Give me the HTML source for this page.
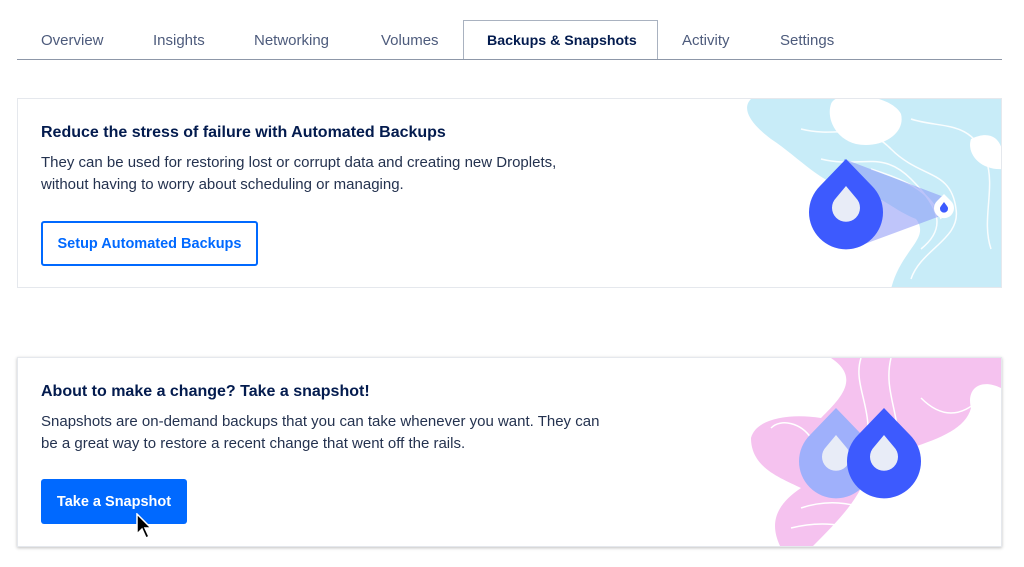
<!DOCTYPE html>
<html><head><style>
body{margin:0;background:#fff;font-family:"Liberation Sans",sans-serif;width:1024px;height:567px;overflow:hidden;position:relative;color:#031b4e}
.tabs{position:absolute;left:17px;top:59px;width:985px;border-top:1px solid #8d97a8}
.tab{position:absolute;top:32px;font-size:15px;color:#4d5b7c}
.active{position:absolute;left:463px;top:20px;width:195px;height:39px;border:1px solid #a9b2c0;border-bottom:none;background:#fff;box-sizing:border-box}
.card{position:absolute;left:17px;width:985px;height:190px;border:1px solid #e5e8ed;box-sizing:border-box;overflow:hidden;background:#fff}
h3{position:absolute;left:23px;margin:0;font-size:16px;font-weight:bold;color:#031b4e}
p{position:absolute;left:23px;margin:0;font-size:15px;line-height:22px;color:#24324f}
.btn{position:absolute;left:23px;height:45px;box-sizing:border-box;font-size:14.5px;font-weight:bold;border-radius:3px;display:flex;align-items:center;justify-content:center}
svg.art{position:absolute;right:0;top:0}
</style></head><body>
<div class="tabs"></div>
<div class="active"></div>
<div class="tab" style="left:41px">Overview</div>
<div class="tab" style="left:153px">Insights</div>
<div class="tab" style="left:254px">Networking</div>
<div class="tab" style="left:381px">Volumes</div>
<div class="tab" style="left:487px;color:#031b4e;font-weight:bold;font-size:14.2px;top:33px">Backups &amp; Snapshots</div>
<div class="tab" style="left:682px">Activity</div>
<div class="tab" style="left:780px">Settings</div>

<div class="card" style="top:98px">
<h3 style="top:25px">Reduce the stress of failure with Automated Backups</h3>
<p style="top:53px">They can be used for restoring lost or corrupt data and creating new Droplets,<br>without having to worry about scheduling or managing.</p>
<div class="btn" style="top:122px;width:217px;border:2px solid #0069ff;color:#0069ff">Setup Automated Backups</div>
<svg class="art" width="260" height="190" viewBox="0 0 260 190">
<path d="M10 0 H260 V190 H150 C160 150 190 140 175 120 C150 110 140 95 110 90 C80 85 60 60 30 40 C10 25 0 10 10 0Z" fill="#c8ecf8"/>
<path d="M90 5 C95 -10 150 -5 160 15 C165 35 140 50 115 45 C95 40 85 20 90 5Z" fill="#fff"/>
<path d="M230 40 C250 30 262 40 262 60 L262 70 C240 72 225 55 230 40Z" fill="#fff"/>
<g fill="none" stroke="#fff" stroke-width="1.5" opacity=".9">
<path d="M60 30 C100 40 120 20 150 50 C180 80 210 70 215 110 C220 140 180 150 170 180"/>
<path d="M80 60 C120 70 140 50 170 80 C200 110 205 130 180 150"/>
<path d="M170 20 C200 30 230 20 245 60 C255 90 240 120 250 150"/>
<path d="M130 70 C160 80 190 90 200 120"/>
</g>
<path d="M103 60 L203 98 L202 116 L110 150Z" fill="#7f8cf5" opacity=".5"/>
<g transform="translate(105,114)"><path d="M0,-54 L26,-27 A37,37 0 1 1 -26,-27 Z" fill="#3d5afe"/><path d="M0,-27 L10,-15 A14,14 0 1 1 -10,-15Z" fill="#e8ecf7"/></g>
<g transform="translate(203,109)"><path d="M0,-14 L7,-7 A10,10 0 1 1 -7,-7 Z" fill="#fff"/><path d="M0,-6 L3,-2 A4,4 0 1 1 -3,-2Z" fill="#3d5afe"/></g>
</svg>
</div>

<div class="card" style="top:357px;box-shadow:0 1px 3px rgba(0,0,0,.25)">
<h3 style="top:25px">About to make a change? Take a snapshot!</h3>
<p style="top:53px">Snapshots are on-demand backups that you can take whenever you want. They can<br>be a great way to restore a recent change that went off the rails.</p>
<div class="btn" style="top:121px;width:146px;background:#0069ff;color:#fff">Take a Snapshot</div>
<svg style="position:absolute;left:117px;top:155px" width="18" height="28" viewBox="0 0 18 28"><path d="M2 1 V21 L7 16 L11 25 L14 23.5 L10 15 L16 15Z" fill="#000" stroke="#fff" stroke-width="1.5"/></svg>
<svg class="art" width="260" height="190" viewBox="0 0 260 190">
<path d="M90 0 H260 V30 C240 20 225 30 230 50 C225 70 200 80 170 90 C160 110 150 120 120 130 C110 150 90 170 70 190 H40 C30 170 30 150 60 130 C40 120 10 110 10 80 C15 60 50 55 80 60 C100 40 120 20 90 0Z" fill="#f5c2ef"/>
<g fill="none" stroke="#fff" stroke-width="1.5"><path d="M120 0 C110 30 140 60 120 100"/><path d="M150 0 C140 40 170 70 150 110"/><path d="M180 40 C200 60 220 60 240 40"/><path d="M60 150 C90 140 120 145 140 160"/><path d="M50 170 C90 160 120 170 140 185"/><path d="M30 70 C40 60 60 65 70 80"/></g>
<g transform="translate(95,104)"><path d="M0,-54 L26,-27 A37,37 0 1 1 -26,-27 Z" fill="#9fb0fb"/><path d="M0,-27 L10,-15 A14,14 0 1 1 -10,-15Z" fill="#e8ecf7"/></g>
<g transform="translate(143,104)"><path d="M0,-54 L26,-27 A37,37 0 1 1 -26,-27 Z" fill="#3d5afe"/><path d="M0,-27 L10,-15 A14,14 0 1 1 -10,-15Z" fill="#e8ecf7"/></g>
</svg>
</div>
</body></html>
